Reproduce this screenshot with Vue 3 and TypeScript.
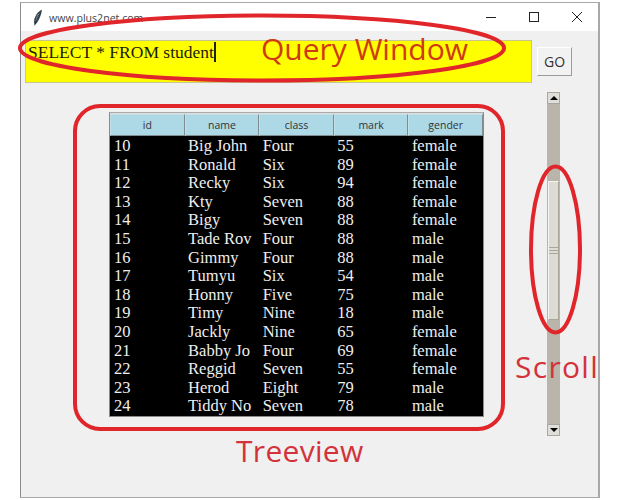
<script setup lang="ts">
const columns: string[] = ['id', 'name', 'class', 'mark', 'gender']
const rows: string[][] = [
  ['10', 'Big John', 'Four', '55', 'female'],
  ['11', 'Ronald', 'Six', '89', 'female'],
  ['12', 'Recky', 'Six', '94', 'female'],
  ['13', 'Kty', 'Seven', '88', 'female'],
  ['14', 'Bigy', 'Seven', '88', 'female'],
  ['15', 'Tade Rov', 'Four', '88', 'male'],
  ['16', 'Gimmy', 'Four', '88', 'male'],
  ['17', 'Tumyu', 'Six', '54', 'male'],
  ['18', 'Honny', 'Five', '75', 'male'],
  ['19', 'Timy', 'Nine', '18', 'male'],
  ['20', 'Jackly', 'Nine', '65', 'female'],
  ['21', 'Babby Jo', 'Four', '69', 'female'],
  ['22', 'Reggid', 'Seven', '55', 'female'],
  ['23', 'Herod', 'Eight', '79', 'male'],
  ['24', 'Tiddy No', 'Seven', '78', 'male'],
]
</script>

<template>
  <div class="page">
    <div class="window">
      <div class="titlebar">
        <svg class="feather" width="12" height="17" viewBox="0 0 12 17">
          <path d="M10 0.8 C6.5 2 3 6.5 2.2 11 C1.9 12.8 2.1 14.5 2.6 15.6 L3.4 15.6 C6.5 12.5 9 7 10 0.8 Z" fill="#34444f" />
          <path d="M7.8 4.5 L4.5 7 M7.2 7 L4 9.2 M6 10 L3.5 11.5" stroke="#c9d2d8" stroke-width="0.6" fill="none" />
          <path d="M8.5 3.5 L2.4 16.5" stroke="#1c2830" stroke-width="0.7" fill="none" />
        </svg>
        <span class="title">www.plus2net.com</span>
        <div class="controls">
          <svg width="12" height="12" viewBox="0 0 12 12"><path d="M1 6.5 H11" stroke="#222" fill="none" /></svg>
          <svg width="12" height="12" viewBox="0 0 12 12"><rect x="1.5" y="1.5" width="9" height="9" stroke="#222" fill="none" /></svg>
          <svg width="12" height="12" viewBox="0 0 12 12"><path d="M1 1 L11 11 M11 1 L1 11" stroke="#222" fill="none" /></svg>
        </div>
      </div>

      <div class="body">
        <div class="query-row">
          <div class="query"><span class="query-text">SELECT * FROM student</span></div>
          <button class="go">GO</button>
        </div>

        <div class="content">
          <div class="tree">
            <div class="tree-head">
              <div v-for="c in columns" :key="c" class="head-cell">{{ c }}</div>
            </div>
            <div class="tree-body">
              <div v-for="r in rows" :key="r[0]" class="tree-row">
                <div v-for="(v, i) in r" :key="i" class="cell">{{ v }}</div>
              </div>
            </div>
          </div>

          <div class="scrollbar">
            <div class="arrow"><span class="tri up"></span></div>
            <div class="trough">
              <div class="thumb"><span class="grip"></span></div>
            </div>
            <div class="arrow"><span class="tri down"></span></div>
          </div>
        </div>
      </div>
    </div>

    <svg class="marks" width="620" height="500" viewBox="0 0 620 500">
      <ellipse cx="262" cy="48" rx="242" ry="32.5" />
      <rect x="75" y="106" width="428" height="323" rx="25" />
      <ellipse cx="555.5" cy="249.5" rx="24.5" ry="83" />
    </svg>
    <span class="label label-query">Query Window</span>
    <span class="label label-tree">Treeview</span>
    <span class="label label-scroll">Scroll</span>
  </div>
</template>

<style>
html, body { margin: 0; background: #fff; }
</style>

<style scoped>
.page {
  position: relative;
  width: 620px;
  height: 500px;
  overflow: hidden;
  background: #fff;
  padding: 2px 0 0 20px;
  box-sizing: border-box;
}
.window {
  width: 580px;
  height: 496px;
  box-sizing: border-box;
  border: 1px solid #a8a8a8;
  border-right-width: 2px;
  border-left-color: #8c8c8c;
  display: flex;
  flex-direction: column;
  background: #f0f0f0;
}
.titlebar {
  height: 28px;
  flex: none;
  background: #fff;
  display: flex;
  align-items: center;
  padding-left: 11px;
  font-family: "Open Sans", sans-serif;
  font-size: 10.6px;
  color: #444;
}
.title { margin-left: 5px; margin-top: 1px; }
.controls {
  margin-left: auto;
  display: flex;
  gap: 31px;
  padding-right: 15px;
  margin-top: -1px;
}
.body { flex: 1; display: flex; flex-direction: column; padding: 9px 0 0 4px; }
.query-row { display: flex; align-items: flex-start; }
.query {
  width: 507px;
  height: 43px;
  box-sizing: border-box;
  background: #ffff00;
  border: 1px solid #c6c68e;
  font-family: "Liberation Serif", serif;
  font-size: 17.5px;
  line-height: 20px;
  color: #1c1c00;
  padding: 1px 0 0 2px;
}
.query-text { border-right: 2px solid #222; }
.go {
  margin: 7px 0 0 5px;
  width: 35px;
  height: 29px;
  box-sizing: border-box;
  padding: 0;
  background: #f2f2f2;
  border: 1px solid #fff;
  border-right-color: #9b9b9b;
  border-bottom-color: #9b9b9b;
  font-family: "Open Sans", sans-serif;
  font-size: 14px;
  color: #333;
}
.content { display: flex; align-items: flex-start; }
.tree {
  width: 375px;
  height: 305px;
  box-sizing: border-box;
  margin: 29px 0 0 84px;
  border: 1px solid #8a8a8a;
  border-top-color: #aaa;
  padding: 1px 0 0 0;
  background: #ddd;
  display: flex;
  flex-direction: column;
}
.tree-head { display: flex; height: 22px; flex: none; }
.head-cell {
  width: 74.6px;
  box-sizing: border-box;
  background: #add8e6;
  border: 1px solid #fff;
  border-color: #c4dfe8 #7f8c90 #7f8c90 #c4dfe8;
  text-align: center;
  font-family: "Open Sans", sans-serif;
  font-size: 10.5px;
  line-height: 20px;
  color: #333;
}
.tree-body { flex: 1; background: #000; padding-top: 1px; }
.tree-row { display: flex; height: 18.6px; }
.cell {
  width: 74.6px;
  box-sizing: border-box;
  padding: 0 0 0 3.5px;
  white-space: nowrap;
  font-family: "Liberation Serif", serif;
  font-size: 16.5px;
  line-height: 18.6px;
  color: #efefef;
}
.cell:first-child { padding-left: 4px; }
.scrollbar {
  margin: 9px 0 0 63px;
  width: 13px;
  height: 344px;
  display: flex;
  flex-direction: column;
  background: #b9b5aa;
}
.arrow {
  height: 12px;
  flex: none;
  box-sizing: border-box;
  background: #dfded8;
  border: 1px solid #aaa89e;
  display: flex;
  align-items: center;
  justify-content: center;
}
.tri { width: 0; height: 0; border-left: 4px solid transparent; border-right: 4px solid transparent; }
.tri.up { border-bottom: 4px solid #000; }
.tri.down { border-top: 4px solid #000; }
.trough { flex: 1; padding: 77px 1px 0; }
.thumb {
  height: 139px;
  box-sizing: border-box;
  background: #dddbd3;
  border: 1px solid #f4f4f0;
  border-right-color: #a9a69c;
  border-bottom-color: #a9a69c;
  display: flex;
  align-items: center;
  justify-content: center;
}
.grip {
  width: 100%;
  height: 7px;
  border-top: 1px solid #aaa89e;
  border-bottom: 1px solid #aaa89e;
  background: linear-gradient(#dddbd3 0 2px, #aaa89e 2px 3px, #dddbd3 3px);
  box-sizing: border-box;
}
.marks { position: absolute; left: 0; top: 0; pointer-events: none; }
.marks ellipse, .marks rect { fill: none; stroke: #e0262b; stroke-width: 4; }
.label {
  position: absolute;
  font-family: "Open Sans", sans-serif;
  font-size: 30px;
  line-height: 36px;
  white-space: nowrap;
}
.label-query { left: 261px; top: 31px; color: #cf3a12; }
.label-tree { left: 236px; top: 433px; color: #d3323a; letter-spacing: 0.3px; }
.label-scroll { left: 515px; top: 349px; color: #d3323a; letter-spacing: 1.3px; }
</style>
